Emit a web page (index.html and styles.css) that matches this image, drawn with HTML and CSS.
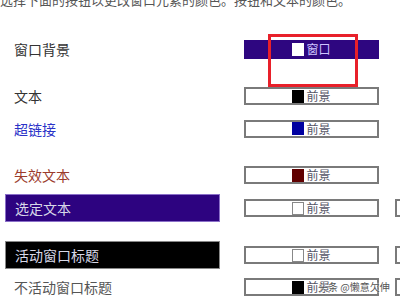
FILE: index.html
```html
<!DOCTYPE html>
<html lang="zh">
<head>
<meta charset="utf-8">
<link rel="stylesheet" href="styles.css">
</head>
<body>
<div class="page">
  <p class="caption">选择下面的按钮以更改窗口元素的颜色。按钮和文本的颜色。</p>
  <div class="rows">
    <div class="row r1">
      <div class="label">窗口背景</div>
      <div class="swatch purple"><span class="chip white"></span><span class="name light">窗口</span></div>
    </div>
    <div class="row r2">
      <div class="label">文本</div>
      <div class="swatch"><span class="chip black"></span><span class="name">前景</span></div>
    </div>
    <div class="row r3">
      <div class="label link">超链接</div>
      <div class="swatch"><span class="chip blue"></span><span class="name">前景</span></div>
    </div>
    <div class="row r4">
      <div class="label disabled">失效文本</div>
      <div class="swatch"><span class="chip maroon"></span><span class="name">前景</span></div>
    </div>
    <div class="row r5">
      <div class="label bar selected">选定文本</div>
      <div class="swatch"><span class="chip white outlined"></span><span class="name">前景</span></div>
      <div class="swatch extra"></div>
    </div>
    <div class="row r6">
      <div class="label bar active">活动窗口标题</div>
      <div class="swatch"><span class="chip white outlined"></span><span class="name">前景</span></div>
      <div class="swatch extra"></div>
    </div>
    <div class="row r7">
      <div class="label inactive">不活动窗口标题</div>
      <div class="swatch"><span class="chip black"></span><span class="name">前景</span></div>
      <div class="swatch extra"></div>
    </div>
  </div>
  <div class="highlight"></div>
  <div class="watermark">头条 @懒意欠伸</div>
</div>
</body>
</html>
```
FILE: styles.css
```css
html, body {
  margin: 0;
  padding: 0;
  background: #ffffff;
  overflow: hidden;
}
.page {
  position: relative;
  width: 400px;
  height: 300px;
  overflow: hidden;
  font-family: "Noto Sans CJK SC", "Noto Sans", sans-serif;
}
.caption {
  margin: -7px 0 0 0;
  height: 14px;
  font-size: 13px;
  line-height: 14px;
  color: #555555;
  white-space: nowrap;
}
.rows {
  display: flex;
  flex-direction: column;
  padding-left: 5px;
}
.row {
  display: flex;
  align-items: center;
  height: 28px;
}
.r1 { margin-top: 28px; }
.r2 { margin-top: 19px; }
.r3 { margin-top: 4.5px; }
.r4 { margin-top: 18.5px; }
.r5 { margin-top: 5px; }
.r6 { margin-top: 19px; }
.r7 { margin-top: 4px; }
.label {
  box-sizing: border-box;
  flex: 0 0 215px;
  width: 215px;
  height: 28px;
  margin-right: 24px;
  padding-left: 9px;
  display: flex;
  align-items: center;
  font-size: 14px;
  color: #333333;
}
.label.link { color: #2a32c8; }
.label.disabled { color: #9b3b2c; }
.label.inactive { color: #555555; }
.label.bar { color: #d8d8e8; }
.label.selected {
  background: #2d0380;
  border: 1px solid #8a6fc8;
}
.label.active {
  background: #000000;
  border: 1px solid #888888;
}
.swatch {
  box-sizing: border-box;
  flex: 0 0 135px;
  width: 135px;
  height: 18px;
  border: 2px solid #7a7a7a;
  background: #ffffff;
  display: flex;
  align-items: center;
  justify-content: center;
  gap: 2px;
}
.swatch.purple {
  background: #2e0680;
  border-color: #2e0680;
  height: 19px;
}
.swatch.extra {
  margin-left: 16px;
}
.chip {
  width: 12px;
  height: 13px;
  box-sizing: border-box;
}
.chip.white { background: #ffffff; }
.chip.outlined { border: 1px solid #888888; }
.chip.black { background: #000000; }
.chip.blue { background: #0000a0; }
.chip.maroon { background: #600000; }
.name {
  font-size: 12px;
  line-height: 14px;
  color: #555566;
}
.name.light { color: #cfc4ff; }
.highlight {
  position: absolute;
  left: 268px;
  top: 34px;
  width: 90px;
  height: 53px;
  box-sizing: border-box;
  border: 3px solid #e8202a;
}
.watermark {
  position: absolute;
  left: 318px;
  top: 280px;
  font-size: 10px;
  line-height: 14px;
  color: #555555;
  text-shadow: 0 0 2px #ffffff, 0 0 2px #ffffff;
  white-space: nowrap;
}
```
